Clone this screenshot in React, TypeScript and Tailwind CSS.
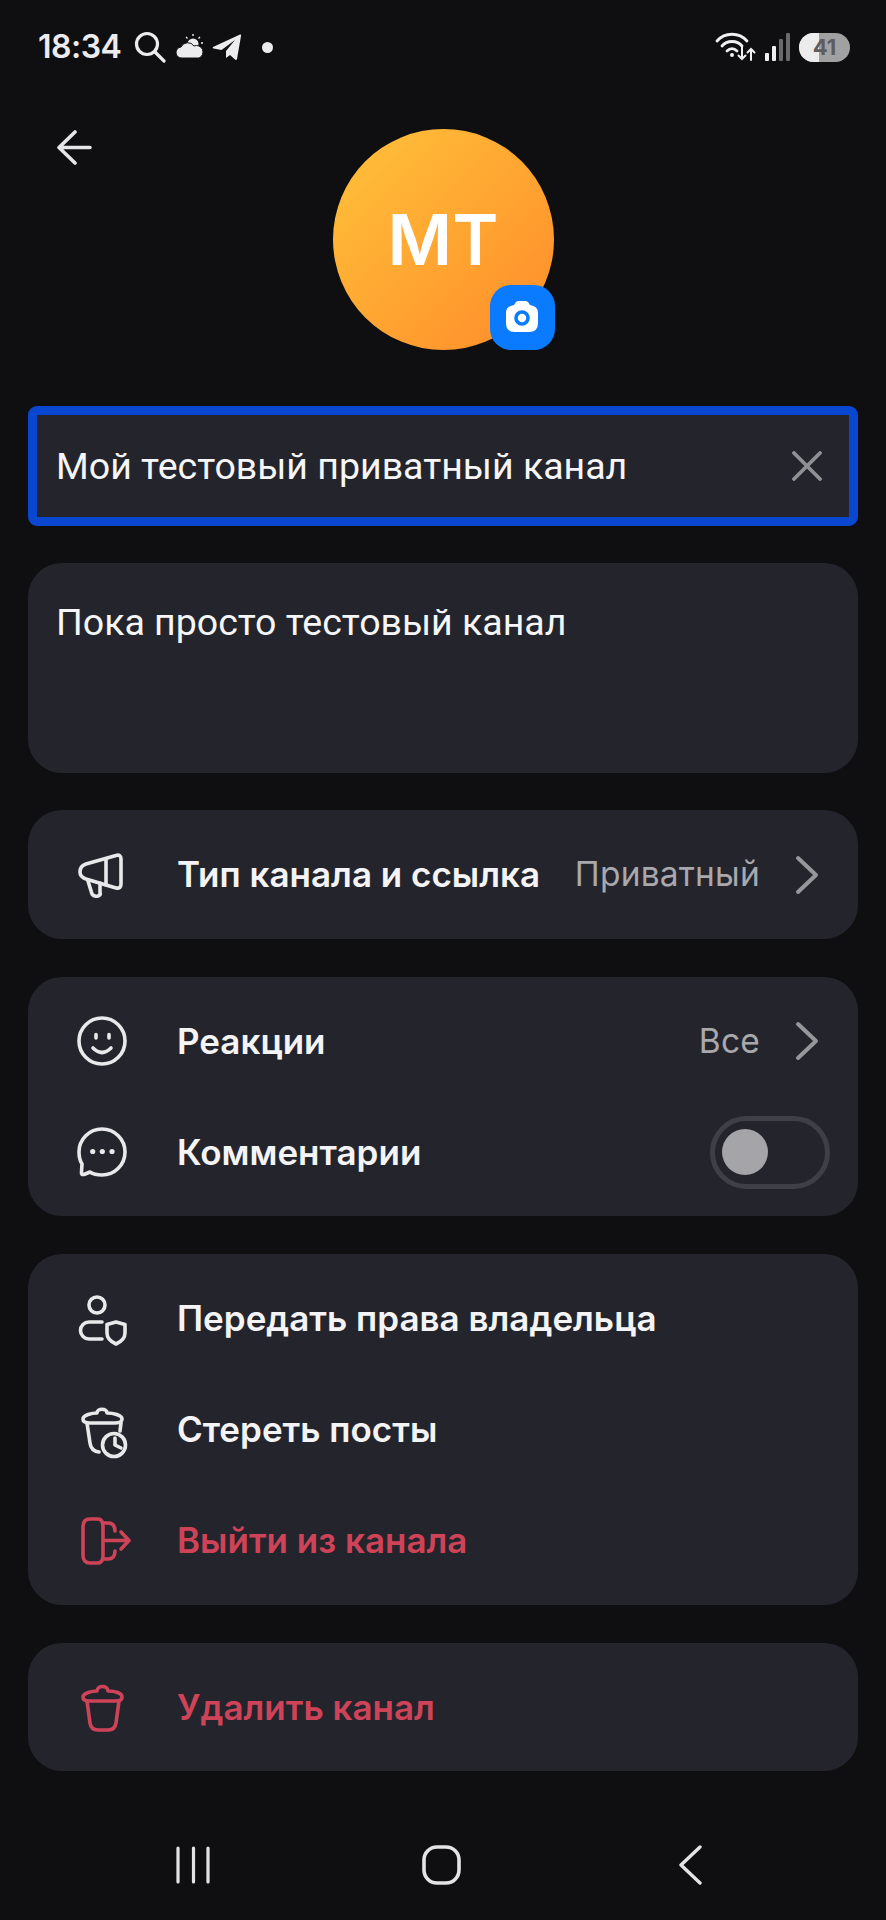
import React from "react";

const ink = "#e9e9eb";
const red = "#cf4359";

function Glyph({ color = ink, children }: { color?: string; children: React.ReactNode }) {
  return (
    <svg width="60" height="60" viewBox="0 0 60 60" fill="none" stroke={color} strokeWidth="3.6" strokeLinecap="round" strokeLinejoin="round" className="shrink-0">
      {children}
    </svg>
  );
}

function Chevron() {
  return (
    <svg width="24" height="40" viewBox="0 0 24 40" fill="none" stroke="#96969b" strokeWidth="4" strokeLinecap="round" strokeLinejoin="round" className="shrink-0">
      <path d="M3 3 L21 20 L3 37" />
    </svg>
  );
}

function Row({ icon, label, color, children }: { icon: React.ReactNode; label: string; color?: string; children?: React.ReactNode }) {
  return (
    <div className="flex h-[111px] items-center pl-[44px]">
      {icon}
      <span className="ml-[45px] text-[35px] font-semibold text-[#f4f4f6]" style={color ? { color } : undefined}>
        {label}
      </span>
      {children}
    </div>
  );
}

function Value({ text }: { text: string }) {
  return (
    <div className="ml-auto flex items-center pr-[39px]">
      <span className="text-[33.5px] tracking-[0.2px] text-[#a8a8ad]">{text}</span>
      <span className="ml-[35px] flex"><Chevron /></span>
    </div>
  );
}

function StatusBar() {
  return (
    <div className="flex h-[92px] items-center pl-[38px] pr-[36px] pt-[2px]">
      <span className="w-[84px] text-[32px] font-semibold tracking-[-0.5px] text-[#ececee]">18:34</span>
      <svg width="32" height="32" viewBox="0 0 32 32" fill="none" stroke="#ececee" strokeWidth="3.2" strokeLinecap="round" className="ml-[12px]">
        <circle cx="13" cy="13" r="10.5" />
        <path d="M21 21 L30 30" />
      </svg>
      <svg width="30" height="26" viewBox="0 0 30 26" fill="#ececee" className="ml-[9px]">
        <circle cx="18" cy="10" r="5.5" />
        <path d="M18 0v2M25 3l-1.5 1.5M28 9h-2M11 3l1.5 1.5" stroke="#ececee" strokeWidth="1.4" />
        <path d="M7 24 a5.5 5.5 0 0 1 -1 -11 a7.5 7.5 0 0 1 13 -1 a6 6 0 0 1 5 12 Z" stroke="#101013" strokeWidth="1" />
      </svg>
      <svg width="30" height="28" viewBox="0 0 30 28" fill="#ececee" className="ml-[7px]">
        <path d="M1 14 L28 1.5 Q29.5 1 29 3 L25 26 Q24.5 27.5 23 26.5 L18 22 L14 25 L14 18 L23 7 L9.5 17 L1.5 15.6 Q0 15 1 14 Z" />
      </svg>
      <span className="ml-[20px] h-[11px] w-[11px] rounded-full bg-[#ececee]" />
      <svg width="42" height="30" viewBox="0 0 42 30" fill="none" stroke="#f0f0f0" strokeWidth="2.8" strokeLinecap="round" className="ml-auto">
        <path d="M2 9 C10 0 24 0 32 9" />
        <path d="M7 14 C12 8 22 8 27 14" />
        <path d="M12 19 C15 16 19 16 22 19" />
        <circle cx="17" cy="23" r="2" fill="#f0f0f0" stroke="none" />
        <path d="M27 15 V27 M23.5 23.5 L27 27 L30.5 23.5 M36 28 V17 M32.5 20.5 L36 17 L39.5 20.5" strokeWidth="2" />
      </svg>
      <div className="ml-[8px] flex h-[28px] items-end gap-[3px]">
        <span className="h-[8px] w-[4px] rounded-[1px] bg-[#efefef]" />
        <span className="h-[15px] w-[4px] rounded-[1px] bg-[#efefef]" />
        <span className="h-[22px] w-[4px] rounded-[1px] bg-[#6a6a6d]" />
        <span className="h-[28px] w-[4px] rounded-[1px] bg-[#6a6a6d]" />
      </div>
      <div className="relative ml-[9px] flex h-[29px] w-[51px] items-center justify-center overflow-hidden rounded-full bg-[#a1a1a1]">
        <span className="absolute inset-y-0 left-0 w-[20px] bg-[#ececec]" />
        <span className="relative text-[22px] font-bold text-[#5d5d60]">41</span>
      </div>
    </div>
  );
}

function Header() {
  return (
    <div className="grid grid-cols-[1fr_221px_1fr] pt-[37px]">
      <div className="pl-[57px] pt-[1px]">
        <svg width="35" height="35" viewBox="0 0 35 35" fill="none" stroke="#e6e6e8" strokeWidth="3.6" strokeLinecap="round" strokeLinejoin="round">
          <path d="M33 17.5 H2 M18 2 L2 17.5 L18 33" />
        </svg>
      </div>
      <div className="relative flex h-[221px] w-[221px] items-center justify-center rounded-full bg-gradient-to-br from-[#ffc23a] to-[#ff8a2a]">
        <span className="text-[70px] font-semibold leading-none text-white">MT</span>
        <div className="absolute bottom-0 right-[-1px] h-[65px] w-[65px] rounded-[21px] bg-[#0a7bff]">
          <svg width="65" height="65" viewBox="0 0 65 65">
            <path d="M24 20 L26 17 Q27 16 29 16 H35 Q37 16 38 17 L40 20 Q48 21 48 28 V38 Q48 47 39 47 H25 Q16 47 16 38 V28 Q16 21 24 20 Z" fill="#fff" />
            <circle cx="32" cy="33" r="6" fill="#fff" stroke="#0a7bff" strokeWidth="3.6" />
          </svg>
        </div>
      </div>
      <div />
    </div>
  );
}

function Switch() {
  return (
    <div className="ml-auto mr-[28px] flex h-[73px] w-[120px] items-center rounded-full border-[5px] border-[#3f4047] pl-[7px]">
      <span className="h-[46px] w-[46px] rounded-full bg-[#a5a4a9]" />
    </div>
  );
}

export default function App() {
  return (
    <div className="flex h-[1920px] w-[886px] flex-col overflow-hidden bg-[#0f0f12] font-['Inter',sans-serif]">
      <StatusBar />
      <Header />

      <div className="mx-[28px] mt-[56px] flex flex-col">
        <div className="flex h-[120px] items-center rounded-[9px] border-[9px] border-[#0a47d1] bg-[#24252c] pl-[19px] pr-[27px]">
          <span className="font-['Roboto',sans-serif] text-[37.5px] text-[#f6f6f8]">Мой тестовый приватный канал</span>
          <svg width="30" height="30" viewBox="0 0 30 30" fill="none" stroke="#8f8f94" strokeWidth="3.8" strokeLinecap="round" className="ml-auto">
            <path d="M2 2 L28 28 M28 2 L2 28" />
          </svg>
        </div>

        <div className="mt-[37px] h-[210px] rounded-[34px] bg-[#24252c] pl-[28px] pt-[37px]">
          <span className="font-['Roboto',sans-serif] text-[37.5px] leading-[44px] text-[#f6f6f8]">Пока просто тестовый канал</span>
        </div>

        <div className="mt-[37px] rounded-[34px] bg-[#24252c] py-[9px]">
          <Row
            label="Тип канала и ссылка"
            icon={
              <Glyph>
                <path d="M14 19 L44 10.5 Q49 9 49 14 V39 Q49 44 44 43 L14 34 Q8 32 8 27 Q8 21 14 19 Z" />
                <path d="M34 14 V40" />
                <path d="M16 36 L20 49 Q22 52 26 51 Q29 50 28 47 V38" />
              </Glyph>
            }
          >
            <Value text="Приватный" />
          </Row>
        </div>

        <div className="mt-[38px] rounded-[34px] bg-[#24252c] py-[8.5px]">
          <Row
            label="Реакции"
            icon={
              <Glyph>
                <circle cx="30" cy="30" r="23" />
                <path d="M24 23.5 V27 M37 23.5 V27" />
                <path d="M21 37 Q30 46 39 37" />
              </Glyph>
            }
          >
            <Value text="Все" />
          </Row>
          <Row
            label="Комментарии"
            icon={
              <Glyph>
                <path d="M30 7 A23 23 0 1 1 30 53 C25 53 21 52 18 50 L12 52.5 Q9 53 9.5 50 L10 42 C7.5 38 7 34 7 30 A23 23 0 0 1 30 7 Z" />
                <circle cx="20.7" cy="29.5" r="2.6" fill={ink} stroke="none" />
                <circle cx="30.3" cy="29.5" r="2.6" fill={ink} stroke="none" />
                <circle cx="40" cy="29.5" r="2.6" fill={ink} stroke="none" />
              </Glyph>
            }
          >
            <Switch />
          </Row>
        </div>

        <div className="mt-[38px] rounded-[34px] bg-[#24252c] py-[9px]">
          <Row
            label="Передать права владельца"
            icon={
              <Glyph>
                <circle cx="25" cy="16" r="8" />
                <path d="M30 33 H17 A8.5 8.5 0 0 0 17 50 H30" />
                <path d="M44 33 L53 35.5 V44 Q53 51 44 55 Q35 51 35 44 V35.5 Z" />
              </Glyph>
            }
          />
          <Row
            label="Стереть посты"
            icon={
              <Glyph>
                <path d="M11 19 C11 15 20 13 25 13 C25 8 35 8 35 13 C41 13 50 15 50 19 C50 22 46 23 43 23 H18 C14 23 11 22 11 19 Z" />
                <path d="M15 23 L18 43 Q19 51 27 52" />
                <path d="M49 23 L48 31" />
                <circle cx="42" cy="45" r="11.5" />
                <path d="M43 38 V45 L49 48" />
              </Glyph>
            }
          />
          <Row
            label="Выйти из канала"
            color={red}
            icon={
              <Glyph color={red}>
                <path d="M18 8 H26 Q31 8 31 16 V44 Q31 52 26 52 H18 Q11 52 11 44 V16 Q11 8 18 8 Z" />
                <path d="M31 12 H36 Q43 12 43 20 M31 48 H36 Q43 48 43 40" />
                <path d="M33 29.5 H56 M49 21 L57 29.5 L49 38" />
              </Glyph>
            }
          />
        </div>

        <div className="mt-[38px] rounded-[34px] bg-[#24252c] py-[8.5px]">
          <Row
            label="Удалить канал"
            color={red}
            icon={
              <Glyph color={red}>
                <path d="M11 20 C11 16 20 14 25 14 C25 8 36 8 36 14 C43 14 50 16 50 20 C50 23 47 24 44 24 H17 C14 24 11 23 11 20 Z" />
                <path d="M15 24 L18 46 Q19 53 26 53 H36 Q43 53 44 46 L47 24" />
              </Glyph>
            }
          />
        </div>
      </div>

      {/* system navigation keys */}
      <div className="mt-auto flex h-[110px] items-start pl-[176px] pt-[36px]">
        <svg width="36" height="38" viewBox="0 0 36 38" fill="none" stroke="#e4e4e6" strokeWidth="3.2" strokeLinecap="round">
          <path d="M2 2 V36 M17.5 2 V36 M32 2 V36" />
        </svg>
        <svg width="42" height="42" viewBox="0 0 42 42" fill="none" stroke="#e4e4e6" strokeWidth="3.6" className="ml-[209px] mt-[-2px]">
          <rect x="3" y="3" width="35" height="36" rx="13" />
        </svg>
        <svg width="26" height="40" viewBox="0 0 26 40" fill="none" stroke="#e4e4e6" strokeWidth="3.4" strokeLinecap="round" strokeLinejoin="round" className="ml-[215px] mt-[-1px]">
          <path d="M22 2 L3 20 L22 38" />
        </svg>
      </div>
    </div>
  );
}
